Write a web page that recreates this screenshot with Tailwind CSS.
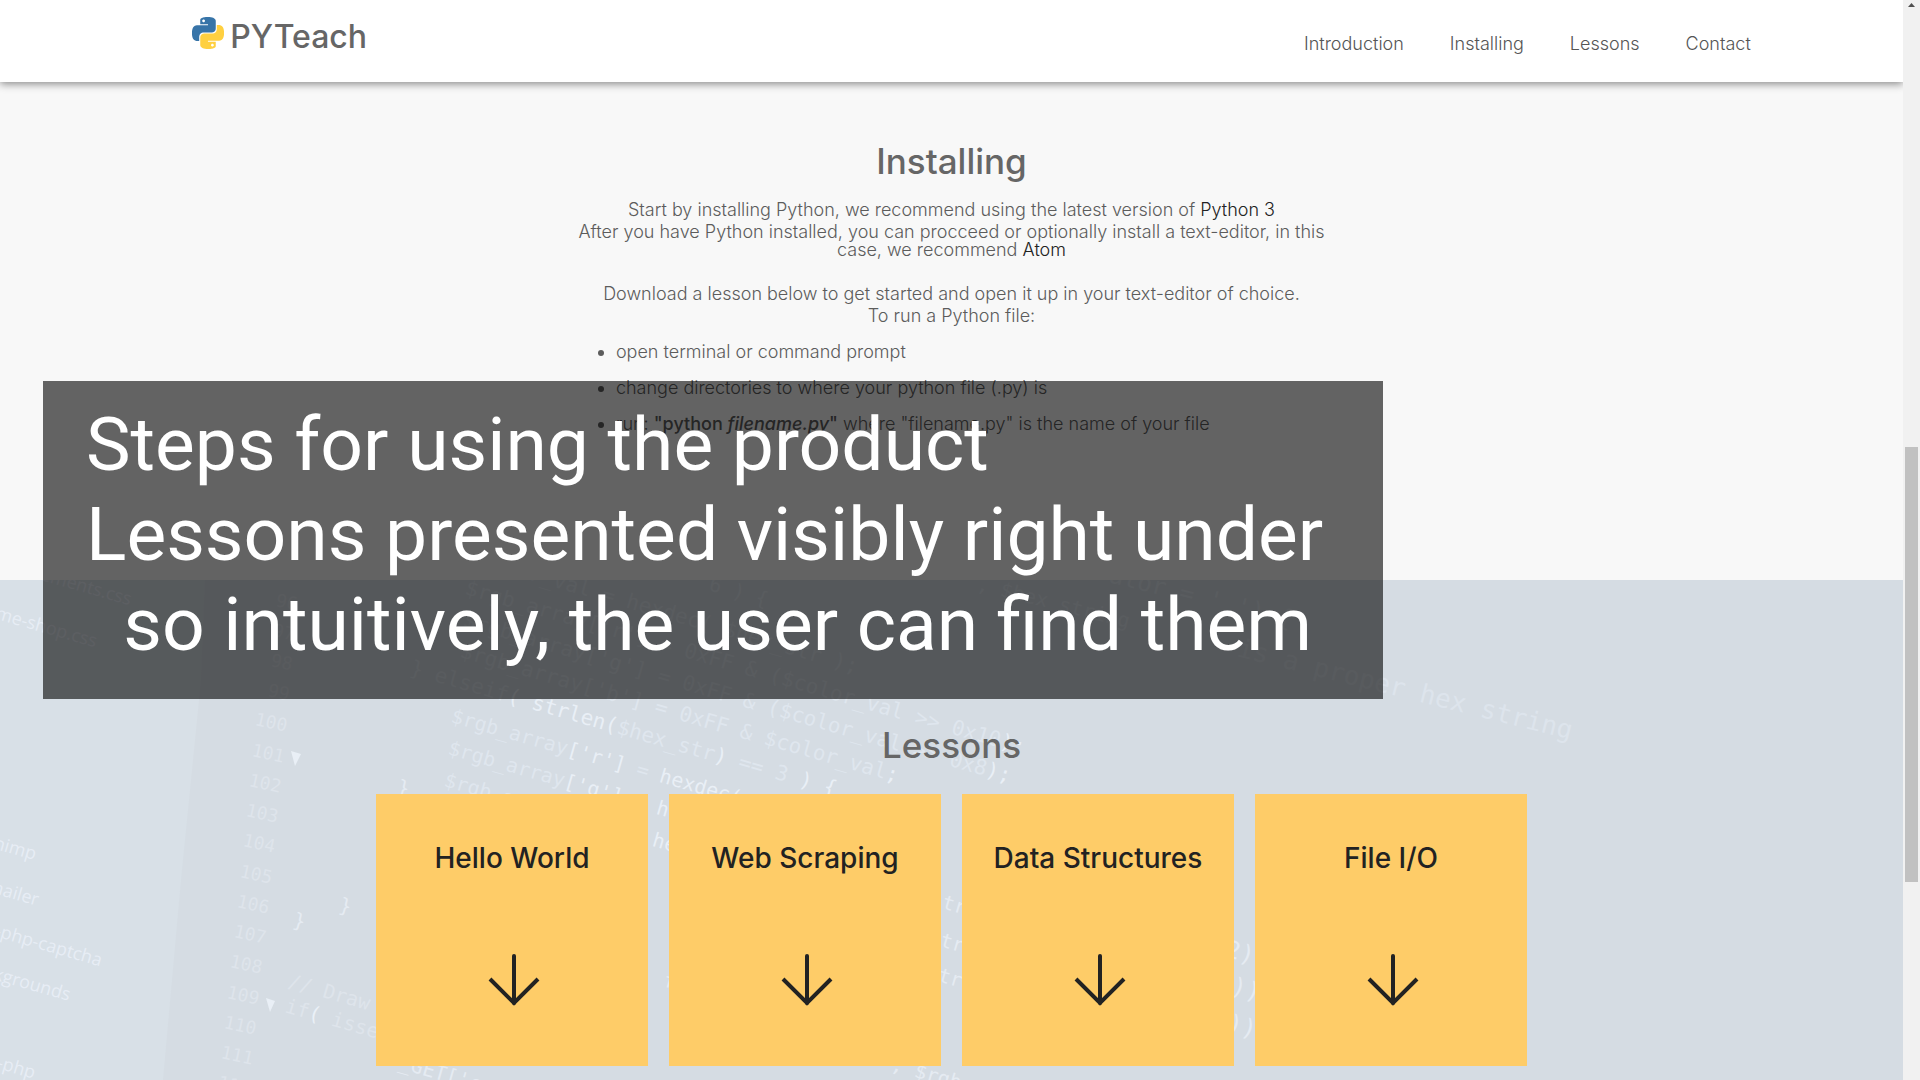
<!DOCTYPE html>
<html lang="en">
<head>
<meta charset="utf-8">
<meta name="viewport" content="width=device-width, initial-scale=1">
<title>PYTeach</title>
<script src="https://cdn.jsdelivr.net/npm/@tailwindcss/browser@4"></script>
</head>
<body class="relative flex h-screen overflow-hidden bg-[#f8f8f8] font-['Inter',sans-serif] text-lg font-light text-[#5c5c5c]">

<div class="flex min-w-0 flex-1 flex-col">
  <header class="relative z-10 flex h-[82px] shrink-0 items-start justify-between bg-white pr-[8%] pl-[10%] shadow-[0_2px_8px_rgba(0,0,0,0.45)]">
    <a href="#" class="flex gap-1.5 pt-4 text-[32px] leading-[42px] font-medium text-[#666]">
      <svg class="mt-px ml-0.5 size-8" viewBox="0 0 24 24" aria-hidden="true">
        <defs>
          <path id="snake" fill-rule="evenodd" d="M14.25.18l.9.2.73.26.59.3.45.32.34.34.25.34.16.33.1.3.04.26.02.2-.01.13V8.5l-.05.63-.13.55-.21.46-.26.38-.3.31-.33.25-.35.19-.35.14-.33.1-.3.07-.26.04-.21.02H8.77l-.69.05-.59.14-.5.22-.41.27-.33.32-.27.35-.2.36-.15.37-.1.35-.07.32-.04.27-.02.21v3.06H3.17l-.21-.03-.28-.07-.32-.12-.35-.18-.36-.26-.36-.36-.35-.46-.32-.59-.28-.73-.21-.88-.14-1.05-.05-1.23.06-1.22.16-1.04.24-.87.32-.71.36-.57.4-.44.42-.33.42-.24.4-.16.36-.1.32-.05.24-.01h.16l.06.01h8.16v-.83H6.18l-.01-2.75-.02-.37.05-.34.11-.31.17-.28.25-.26.31-.23.38-.2.44-.18.51-.15.58-.12.64-.1.71-.06.77-.04.84-.02 1.27.05zm-6.3 1.98l-.23.33-.08.41.08.41.23.34.33.22.41.09.41-.09.33-.22.23-.34.08-.41-.08-.41-.23-.33-.33-.22-.41-.09-.41.09z"/>
        </defs>
        <use href="#snake" fill="#3774a8"/>
        <use href="#snake" fill="#ffd040" transform="rotate(180 12 12)"/>
      </svg>
      PYTeach
    </a>
    <nav class="flex gap-[46px] pt-8 leading-6 text-[#555]">
      <a href="#introduction">Introduction</a>
      <a href="#installing">Installing</a>
      <a href="#lessons">Lessons</a>
      <a href="#contact">Contact</a>
    </nav>
  </header>

  <main class="flex min-h-0 flex-1 flex-col">
    <section id="installing" class="flex min-h-[498px] shrink-0 flex-col items-center pt-[59px]">
      <h2 class="text-[35px] leading-10 font-medium text-[#666]">Installing</h2>
      <div class="mt-5 w-2/5 min-w-[761px] leading-[18px]">
        <div class="flex flex-col gap-1 text-center">
          <p>Start by installing Python, we recommend using the latest version of <a href="#" class="text-[#222]">Python 3</a></p>
          <p>After you have Python installed, you can procceed or optionally install a text-editor, in this case, we recommend <a href="#" class="text-[#222]">Atom</a></p>
          <p class="pt-[22px]">Download a lesson below to get started and open it up in your text-editor of choice.</p>
          <p>To run a Python file:</p>
        </div>
        <ul class="mt-[18px] flex list-disc flex-col gap-[18px] pl-[45px]">
          <li>open terminal or command prompt</li>
          <li>change directories to where your python file (.py) is</li>
          <li>run: <b class="font-medium">"python <i>filename.py</i>"</b> where "filename.py" is the name of your file</li>
        </ul>
      </div>
    </section>

    <section id="lessons" class="relative flex flex-1 flex-col items-center bg-[#d5dce3] pt-[145px]">
      <!-- faded editor window behind the lesson cards -->
      <svg class="absolute inset-0 size-full font-['DejaVu_Sans_Mono',monospace] text-xl" viewBox="0 580 1903 500" preserveAspectRatio="xMinYMin slice" aria-hidden="true">
        <path d="M0 580H205L201 680L181 880L163 1080H0Z" fill="#d8e0e7"/>
        <g fill="#e7edf5" class="font-['Open_Sans',sans-serif] text-lg font-normal">
          <text transform="translate(20 574) rotate(16)">-elements.css</text>
          <text transform="translate(-32 611) rotate(16)">theme-shop.css</text>
          <text transform="translate(-50 836) rotate(16)">mailchimp</text>
          <text transform="translate(-46 882) rotate(16)">phpmailer</text>
          <text transform="translate(-6 936) rotate(16)">-php-captcha</text>
          <text transform="translate(-36 971) rotate(16)">backgrounds</text>
          <text transform="translate(-4 1068) rotate(16)">-php</text>
        </g>
        <g fill="#dee4eb" class="text-lg">
          <text transform="translate(275 606) rotate(12)">96</text>
          <text transform="translate(272 636) rotate(12)">97</text>
          <text transform="translate(270 666) rotate(12)">98</text>
          <text transform="translate(267 696) rotate(12)">99</text>
          <text transform="translate(254 725) rotate(12)">100</text>
          <text transform="translate(251 756) rotate(12)">101</text>
          <text transform="translate(248 786) rotate(12)">102</text>
          <text transform="translate(245 816) rotate(12)">103</text>
          <text transform="translate(242 846) rotate(12)">104</text>
          <text transform="translate(239 877) rotate(12)">105</text>
          <text transform="translate(236 907) rotate(12)">106</text>
          <text transform="translate(233 937) rotate(12)">107</text>
          <text transform="translate(229 967) rotate(12)">108</text>
          <text transform="translate(226 998) rotate(12)">109</text>
          <text transform="translate(223 1028) rotate(12)">110</text>
          <text transform="translate(220 1058) rotate(12)">111</text>
          <text transform="translate(217 1088) rotate(12)">112</text>
          <text transform="translate(287 987) rotate(16)" font-size="20">// Draw the box</text>
          <text transform="translate(284 1012) rotate(16)" font-size="20">if<tspan fill="#eaf0f7">(</tspan> isset( $_GET</text>
        </g>
        <path d="M291 751L301 754L295 766ZM266 998L275 1001L270 1012Z" fill="#e9eff6"/>
        <g fill="#dfe6ee" class="font-normal">
          <text transform="translate(467 562) rotate(16)" font-size="21">$color_val = hexdec( $hex_str );</text>
          <text transform="translate(464 594) rotate(16)" class="text-[21px]">$rgb_array['r'] = 0xFF &amp; ($color_val &gt;&gt; 0x10<tspan fill="#e9eff6">);</tspan></text>
          <text transform="translate(462 626) rotate(16)" class="text-[21px]">$rgb_array['g'] = 0xFF &amp; ($color_val &gt;&gt; 0x8<tspan fill="#e9eff6">);</tspan></text>
          <text transform="translate(459 657) rotate(16)" class="text-[21px]">$rgb_array['b'] = 0xFF &amp; $color_val<tspan fill="#e9eff6">;</tspan></text>
          <text transform="translate(409 674) rotate(16)" class="text-[21px]">} elseif<tspan fill="#e9eff6">( strlen(</tspan>$hex_str<tspan fill="#e9eff6">)</tspan> == 3 <tspan fill="#e9eff6">) {</tspan></text>
          <text transform="translate(450 722) rotate(16)">$rgb_array<tspan fill="#e9eff6">['r']</tspan> = <tspan fill="#e9eff6">hexdec(</tspan></text>
          <text transform="translate(447 754) rotate(16)">$rgb_array<tspan fill="#e9eff6">['g']</tspan> = <tspan fill="#e9eff6">hexdec(</tspan></text>
          <text transform="translate(443 786) rotate(16)">$rgb_array<tspan fill="#e9eff6">['b']</tspan> = <tspan fill="#e9eff6">hexdec(</tspan></text>
          <text transform="translate(708 590) rotate(16)">6 ) {</text>
          <text transform="translate(976 590) rotate(14)">, $hex_string</text>
          <text transform="translate(1108 582) rotate(14)" class="text-2xl">ator = ' ') {</text>
          <text transform="translate(1236 656) rotate(14)" class="text-[26px]" fill="#dde4ec">is a proper hex string</text>
        </g>
        <g fill="#e5ebf2" class="font-normal">
          <text transform="translate(396 793) rotate(14)">}</text>
          <text transform="translate(338 911) rotate(14)">}</text>
          <text transform="translate(292 926) rotate(14)">}</text>
          <text transform="translate(662 986) rotate(16)">f</text>
          <text transform="translate(941 908) rotate(16)">tr</text>
          <text transform="translate(939 946) rotate(16)">tr</text>
          <text transform="translate(937 981) rotate(16)">tr</text>
          <text transform="translate(1224 956) rotate(16)" class="text-2xl">2)</text>
          <text transform="translate(1230 993) rotate(16)" class="text-2xl">))</text>
          <text transform="translate(1226 1030) rotate(16)" class="text-2xl">))</text>
          <text transform="translate(398 1068) rotate(16)">_GET['c</text>
          <text transform="translate(890 1070) rotate(16)">; $rgb_</text>
        </g>
      </svg>

      <h2 class="relative text-[35px] leading-10 font-medium text-[#666]">Lessons</h2>
      <div class="relative mt-[29px] grid grid-cols-[repeat(4,272px)] gap-[21px] text-[28px] leading-10 font-medium text-[#222]">
        <a href="#hello" class="flex h-[272px] flex-col items-center bg-[#fecc68] pt-11">Hello World
          <svg class="mt-[75px] ml-1 h-[54px] w-[54px]" viewBox="0 0 54 54" fill="none" stroke="#222" stroke-width="4" aria-hidden="true"><path d="M27 3V50" stroke-linecap="round"/><path d="M3 26L27 50L51 26"/></svg>
        </a>
        <a href="#scraping" class="flex h-[272px] flex-col items-center bg-[#fecc68] pt-11">Web Scraping
          <svg class="mt-[75px] ml-1 h-[54px] w-[54px]" viewBox="0 0 54 54" fill="none" stroke="#222" stroke-width="4" aria-hidden="true"><path d="M27 3V50" stroke-linecap="round"/><path d="M3 26L27 50L51 26"/></svg>
        </a>
        <a href="#structures" class="flex h-[272px] flex-col items-center bg-[#fecc68] pt-11">Data Structures
          <svg class="mt-[75px] ml-1 h-[54px] w-[54px]" viewBox="0 0 54 54" fill="none" stroke="#222" stroke-width="4" aria-hidden="true"><path d="M27 3V50" stroke-linecap="round"/><path d="M3 26L27 50L51 26"/></svg>
        </a>
        <a href="#files" class="flex h-[272px] flex-col items-center bg-[#fecc68] pt-11">File I/O
          <svg class="mt-[75px] ml-1 h-[54px] w-[54px]" viewBox="0 0 54 54" fill="none" stroke="#222" stroke-width="4" aria-hidden="true"><path d="M27 3V50" stroke-linecap="round"/><path d="M3 26L27 50L51 26"/></svg>
        </a>
      </div>
    </section>
  </main>
</div>

<!-- scroll bar -->
<div class="relative z-20 flex w-[17px] shrink-0 flex-col items-center bg-[#f1f1f1]" aria-hidden="true">
  <svg class="h-[17px] w-[17px]" viewBox="0 0 17 17"><path d="M5 7L8.500 3L12 7Z" fill="#505050"/></svg>
  <div class="mt-[430px] h-[435px] w-[13px] bg-[#c1c1c1]"></div>
</div>

<!-- caption laid over the page -->
<div class="absolute top-[381px] left-[43px] z-20 w-[1340px] bg-black/60 pt-[18px] pb-[30px] pl-[43px] font-['Roboto',sans-serif] text-[75px] leading-[90px] font-normal whitespace-pre text-white"><p>Steps for using the product</p><p>Lessons presented visibly right under</p><p>  so intuitively, the user can find them</p></div>

</body>
</html>
